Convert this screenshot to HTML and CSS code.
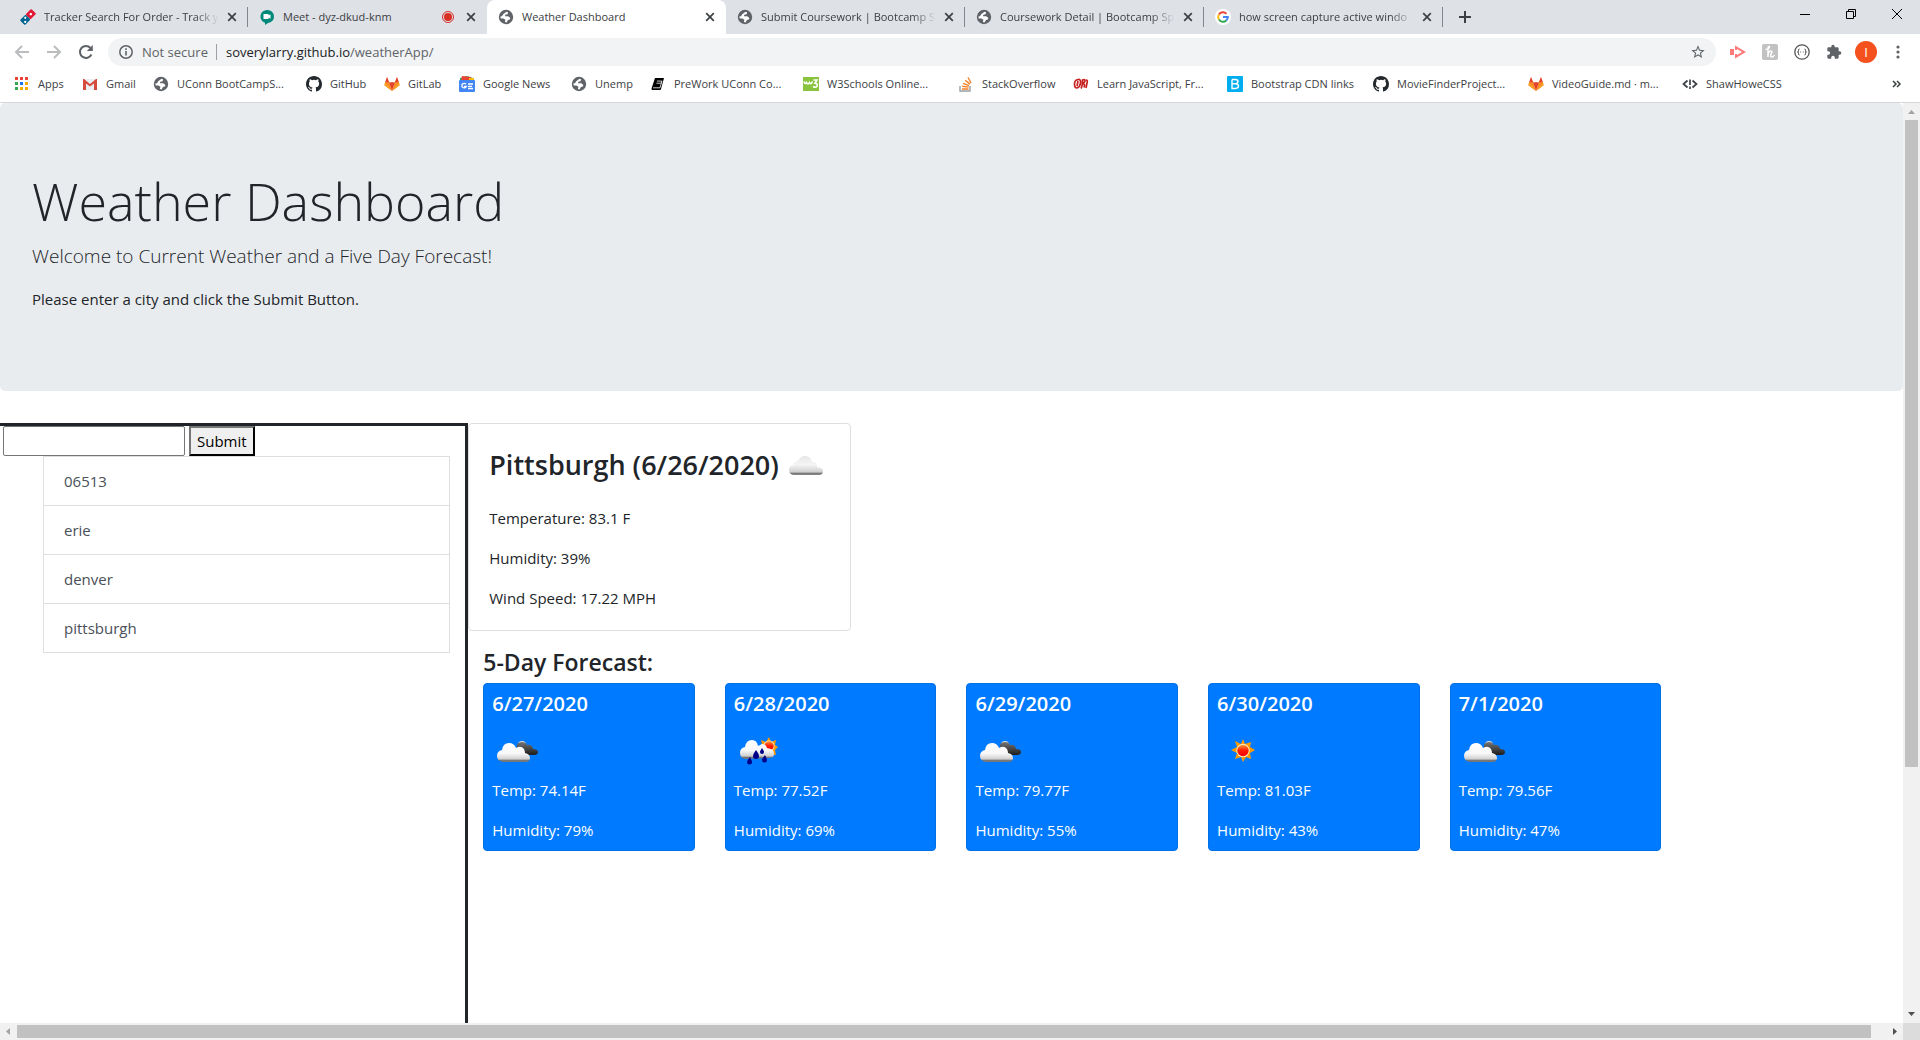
FILE: index.html
```html
<!DOCTYPE html>
<html lang="en">
<head>
<meta charset="utf-8">
<title>Weather Dashboard</title>
<link rel="stylesheet" href="styles.css">
</head>
<body>
<svg class="defs" aria-hidden="true">
  <defs>
    <linearGradient id="cloud-fill" x1="0" y1="0" x2="0" y2="1">
      <stop offset="0" stop-color="#fff"/><stop offset=".55" stop-color="#f8f8f8"/><stop offset=".85" stop-color="#cfcfcf"/><stop offset=".9" stop-color="#777"/><stop offset="1" stop-color="#777"/>
    </linearGradient>
    <linearGradient id="grey-fill" x1="0" y1="0" x2="0" y2="1">
      <stop offset="0" stop-color="#e6e6e6"/><stop offset=".45" stop-color="#f5f5f5"/><stop offset=".85" stop-color="#cfcfcf"/><stop offset=".9" stop-color="#777"/><stop offset="1" stop-color="#888"/>
    </linearGradient>
    <linearGradient id="dark-fill" x1="0" y1="0" x2="0" y2="1">
      <stop offset="0" stop-color="#777"/><stop offset=".4" stop-color="#505050"/><stop offset="1" stop-color="#1c1c1c"/>
    </linearGradient>
    <linearGradient id="sun-fill" x1="0" y1="0" x2="0" y2="1">
      <stop offset="0" stop-color="#ff9a3c"/><stop offset=".5" stop-color="#ff1a00"/><stop offset="1" stop-color="#f00"/>
    </linearGradient>
  </defs>
  <symbol id="globe" viewBox="0 0 16 16"><circle cx="8" cy="8" r="7.200" fill="#5f6368"/><path d="M8.500 2.800 10 3.200 9.600 5.200 7.300 5.800 7 7.300h3.200l2.200 1.800-.6 1.500-1.800.4-1.500 2.500-1.600-.4.500-2.300-2-1.200H2.800L2.300 7.600 4 7.300l1.200-2.100z" fill="#fff"/></symbol>
  <symbol id="close" viewBox="0 0 10 10"><path d="m1.200 1.200 7.600 7.600m0-7.600L1.200 8.800" stroke="#3c4043" stroke-width="1.700"/></symbol>
  <symbol id="github" viewBox="0 0 16 16"><path fill="#24292e" d="M8 0C3.580 0 0 3.580 0 8c0 3.540 2.290 6.530 5.470 7.590.4.070.55-.17.55-.38 0-.19-.01-.82-.01-1.490-2.010.37-2.530-.49-2.690-.94-.09-.23-.48-.94-.82-1.130-.28-.15-.68-.52-.01-.53.63-.01 1.080.58 1.230.82.72 1.210 1.870.87 2.330.66.07-.52.28-.87.51-1.070-1.780-.2-3.640-.89-3.640-3.950 0-.87.31-1.590.82-2.150-.08-.2-.36-1.020.08-2.120 0 0 .67-.21 2.200.82a7.640 7.640 0 0 1 4 0c1.530-1.040 2.200-.82 2.200-.82.44 1.100.16 1.920.08 2.120.51.56.82 1.270.82 2.150 0 3.070-1.870 3.750-3.650 3.950.29.25.54.73.54 1.480 0 1.070-.01 1.930-.01 2.200 0 .21.15.46.55.38A8.010 8.010 0 0 0 16 8c0-4.420-3.580-8-8-8z"/></symbol>
  <symbol id="gitlab" viewBox="0 0 16 16"><path d="M8 15 .4 9.300 1.200 6h4z" fill="#fc8a26"/><path d="m8 15 7.600-5.700L14.800 6h-4z" fill="#fc8a26"/><path d="M8 15 5.100 6.200h5.800z" fill="#e24329"/><path d="M1.100 6.300 3 .8l2.200 5.500zM14.900 6.300 13 .8l-2.200 5.500z" fill="#e24329"/><path d="M8 15 .4 9.300l.7-3zM8 15l7.600-5.700-.7-3z" fill="#fca326"/></symbol>
  <symbol id="clouds" viewBox="0 0 50 50"><circle cx="30" cy="21" r="4" fill="#ddd"/><path d="M25 30V21q1-3 5-3 4 0 5 3 5-1 6 4 5 0 5 3 0 3-4 3H28z" fill="url(#dark-fill)"/><path d="M11 38q-6-1-6-6 0-5 5-6 1-7 7-7 5 0 7 5 5-3 8 1 1 2 1 4 5 1 5 5 0 4-5 4z" fill="url(#cloud-fill)"/></symbol>
  <symbol id="cloud" viewBox="0 0 50 50"><path d="M12 35q-4-1-4-5 0-4 4-5 1-4 5-4 2-5 7-5 6 0 7 6 5-1 5 5 6 1 6 4 0 4-4 4z" fill="url(#grey-fill)"/></symbol>
  <symbol id="sun" viewBox="0 0 50 50"><path d="m26 15 2 5 6-2-1 5 5 3-5 3 1 6-5-2-3 5-2-5-6 2 2-6-6-3 6-3-2-6 6 3z" fill="#f90"/><circle cx="26" cy="26.500" r="6.700" fill="#fff1c0"/><circle cx="26" cy="26.500" r="5.700" fill="url(#sun-fill)"/></symbol>
  <symbol id="rain" viewBox="0 0 50 50"><path d="m35 13 2 5 5-2-1 5 3 2-3 3 1 5-5-1-3 4-3-4-4 1 1-5-3-3 3-3-1-4 5 2z" fill="#f90"/><circle cx="35" cy="22" r="5.500" fill="#fff1c0"/><circle cx="35" cy="22" r="4.700" fill="url(#sun-fill)"/><path d="M11 35q-5-1-5-6 0-5 5-6 1-7 7-7 5 0 6 6l4-2q4 0 5 4l4 1q3 1 3 5t-5 4z" fill="url(#cloud-fill)"/><path d="M22 26q3 4 3 6a3 3 0 0 1-6 0q0-2 3-6zM28 24q2 3 2 4a2 2 0 0 1-4 0q0-1 2-4zM31 31q2 4 2 5a2.500 2.500 0 0 1-5 0q0-1 3-5zM16 33q2 4 2 5a2.500 2.500 0 0 1-5 0q0-1 3-5z" fill="#00008b"/></symbol>
</svg>

<header class="browser">
  <div class="tabs">
    <div class="tab">
      <svg class="icon" viewBox="0 0 16 16"><g transform="rotate(45 8 8)"><rect x="4.500" y="0" width="7" height="8" rx="1" fill="#e31837"/><rect x="4.500" y="8" width="7" height="8" rx="1" fill="#006491"/><circle cx="8" cy="4" r="1.300" fill="#fff"/><circle cx="6.600" cy="10.500" r="1.100" fill="#fff"/><circle cx="9.500" cy="13.400" r="1.100" fill="#fff"/></g></svg>
      <span class="tab-title fade">Tracker Search For Order - Track y</span>
      <button class="tab-close" aria-label="Close tab"><svg><use href="#close"/></svg></button>
    </div>
    <div class="tab tab-before">
      <svg class="icon" viewBox="0 0 16 16"><path d="M8 1a6.500 6.500 0 0 1 1 13l-3 2v-2.300A6.500 6.500 0 0 1 8 1z" fill="#00897b"/><path d="M4.500 5h5v1.500l2-1.200v4.400l-2-1.200V10h-5z" fill="#fff"/></svg>
      <span class="tab-title">Meet - dyz-dkud-knm</span>
      <svg class="record" viewBox="0 0 12 12"><circle cx="6" cy="6" r="5.500" fill="none" stroke="#d93025"/><circle cx="6" cy="6" r="4" fill="#d93025"/></svg>
      <button class="tab-close" aria-label="Close tab"><svg><use href="#close"/></svg></button>
    </div>
    <div class="tab tab-active">
      <svg class="icon"><use href="#globe"/></svg>
      <span class="tab-title">Weather Dashboard</span>
      <button class="tab-close" aria-label="Close tab"><svg><use href="#close"/></svg></button>
    </div>
    <div class="tab">
      <svg class="icon"><use href="#globe"/></svg>
      <span class="tab-title fade">Submit Coursework | Bootcamp S</span>
      <button class="tab-close" aria-label="Close tab"><svg><use href="#close"/></svg></button>
    </div>
    <div class="tab">
      <svg class="icon"><use href="#globe"/></svg>
      <span class="tab-title fade">Coursework Detail | Bootcamp Sp</span>
      <button class="tab-close" aria-label="Close tab"><svg><use href="#close"/></svg></button>
    </div>
    <div class="tab">
      <svg class="icon" viewBox="0 0 16 16"><circle cx="8" cy="8" r="8" fill="#fff"/><g fill="none" stroke-width="2"><path d="M3.900 5.500A4.800 4.800 0 0 1 11.500 4.700" stroke="#ea4335"/><path d="M3.900 10.500a4.800 4.800 0 0 1 0-5" stroke="#fbbc05"/><path d="M11.300 11.500a4.800 4.800 0 0 1-7.400-1" stroke="#34a853"/><path d="M8 8h4.800a4.800 4.800 0 0 1-1.500 3.500" stroke="#4285f4"/></g></svg>
      <span class="tab-title fade">how screen capture active windo</span>
      <button class="tab-close" aria-label="Close tab"><svg><use href="#close"/></svg></button>
    </div>
    <button class="new-tab" aria-label="New tab"><svg viewBox="0 0 12 12"><path d="M6 0v12M0 6h12" stroke="#3c4043" stroke-width="2"/></svg></button>
    <div class="window-controls">
      <button aria-label="Minimize"><svg viewBox="0 0 12 12"><path d="M1 6.500h10" stroke="#000"/></svg></button>
      <button aria-label="Restore"><svg viewBox="0 0 12 12"><path d="M1.500 3.500h7v7h-7zM3.500 3.500v-2h7v7h-2" fill="none" stroke="#000"/></svg></button>
      <button aria-label="Close"><svg viewBox="0 0 12 12"><path d="m1 1 10 10M11 1 1 11" stroke="#000"/></svg></button>
    </div>
  </div>

  <div class="toolbar">
    <button class="nav" aria-label="Back"><svg viewBox="0 0 16 16"><path d="M15 8H2m6-6L2 8l6 6" fill="none" stroke="#babcbe" stroke-width="2"/></svg></button>
    <button class="nav" aria-label="Forward"><svg viewBox="0 0 16 16"><path d="M1 8h13M8 2l6 6-6 6" fill="none" stroke="#babcbe" stroke-width="2"/></svg></button>
    <button class="nav" aria-label="Reload"><svg viewBox="0 0 16 16"><path d="M13.400 10.500A6 6 0 1 1 12.500 4" fill="none" stroke="#5f6368" stroke-width="2"/><path d="M14.800 1v6h-6z" fill="#5f6368"/></svg></button>
    <div class="address">
      <svg class="info" viewBox="0 0 14 14"><circle cx="7" cy="7" r="6.200" fill="none" stroke="#5f6368" stroke-width="1.500"/><path d="M7 6v4.500M7 3.300v1.600" stroke="#5f6368" stroke-width="1.600"/></svg>
      <span class="secure">Not secure</span>
      <span class="url"><b>soverylarry.github.io</b>/weatherApp/</span>
      <svg class="star" viewBox="0 0 24 24"><path fill="#5f6368" d="m22 9.240-7.190-.62L12 2 9.190 8.630 2 9.240l5.460 4.730L5.820 21 12 17.270 18.180 21l-1.630-7.030zM12 15.400l-3.760 2.270 1-4.280-3.320-2.880 4.380-.38L12 6.100l1.710 4.040 4.380.38-3.320 2.880 1 4.280z"/></svg>
    </div>
    <div class="extensions">
      <svg viewBox="0 0 16 16"><path d="M0 5h4v6H0z" fill="#ff7b7b"/><path d="M5 1.500 16 8 5 14.500V10h2v1l5-3-5-3v1H5z" fill="#ff7b7b"/></svg>
      <svg viewBox="0 0 16 16"><rect width="16" height="16" rx="2" fill="#c2c2c2"/><path d="M3.500 5.500Q7.500 5 7.500 2.500 6 2 6 5v8M6 10q1-3 3-3t0 3q-1 3 1 3 1.500 0 2.500-2" fill="none" stroke="#fff" stroke-width="1.500"/></svg>
      <svg viewBox="0 0 16 16"><circle cx="8" cy="8" r="7.200" fill="none" stroke="#555" stroke-width="1.300"/><path d="M5.500 5Q4.300 5 4.500 6.500 4.700 8 3.500 8 4.700 8 4.500 9.500 4.300 11 5.500 11M10.500 5q1.200 0 1 1.500-.2 1.500 1 1.500-1.200 0-1 1.500.2 1.500-1 1.500M6.300 8h.8m1.800 0h.8" fill="none" stroke="#444"/></svg>
      <svg viewBox="0 0 24 24"><path fill="#5f6368" d="M20.500 11H19V7c0-1.100-.9-2-2-2h-4V3.500a2.500 2.500 0 0 0-5 0V5H4c-1.100 0-2 .9-2 2v3.800h1.500a2.700 2.700 0 0 1 0 5.400H2V20c0 1.100.9 2 2 2h3.800v-1.500a2.700 2.700 0 0 1 5.400 0V22H17c1.100 0 2-.9 2-2v-4h1.500a2.500 2.500 0 0 0 0-5z"/></svg>
    </div>
    <button class="avatar">I</button>
    <button class="more" aria-label="Menu"><svg viewBox="0 0 4 14"><g fill="#5f6368"><circle cx="2" cy="2" r="1.600"/><circle cx="2" cy="7" r="1.600"/><circle cx="2" cy="12" r="1.600"/></g></svg></button>
  </div>

  <nav class="bookmarks">
    <a href="#"><svg class="icon" viewBox="0 0 16 16"><path d="M1 1h3v3H1zM6 1h3v3H6zM11 1h3v3h-3z" fill="#ea4335"/><path d="M1 6h3v3H1z" fill="#34a853"/><path d="M6 6h3v3H6z" fill="#1a73e8"/><path d="M11 6h3v3h-3zM6 11h3v3H6zM11 11h3v3h-3z" fill="#fbab00"/><path d="M1 11h3v3H1z" fill="#34a853"/></svg>Apps</a>
    <a href="#"><svg class="icon" viewBox="0 0 16 16"><path d="M1 3h14v11H1z" fill="#eceff1"/><path d="M1 3h1l6 5 6-5h1v11h-3V7.500l-4 3-4-3V14H1z" fill="#d54b3d"/></svg>Gmail</a>
    <a href="#"><svg class="icon"><use href="#globe"/></svg>UConn BootCampS...</a>
    <a href="#"><svg class="icon"><use href="#github"/></svg>GitHub</a>
    <a href="#"><svg class="icon"><use href="#gitlab"/></svg>GitLab</a>
    <a href="#"><svg class="icon" viewBox="0 0 16 16"><path d="M1 2 8 0l6 2v3H1z" fill="#34a853"/><path d="m3 0 9 1v4H2z" fill="#ea4335"/><path d="M10 2h5v4h-5z" fill="#fbbc05"/><rect y="4" width="16" height="12" rx="1" fill="#4285f4"/><path d="M7 8.200A2.300 2.300 0 1 0 7.300 10.500H5M9 8h5M9 10.300h4M9 12.500h5" fill="none" stroke="#fff" stroke-width="1.300"/></svg>Google News</a>
    <a href="#"><svg class="icon"><use href="#globe"/></svg>Unemp</a>
    <a href="#"><svg class="icon" viewBox="0 0 16 16"><path d="M5 2h9l-3 11q0 1-1 1H2q-1-1 0-3z"/><path d="m7 5 5 .2M6.400 7.200h5M3 11.800h7l2-7" fill="none" stroke="#fff" stroke-width=".8"/></svg>PreWork UConn Co...</a>
    <a href="#"><svg class="icon" viewBox="0 0 16 16"><path d="M0 1h16v14H0z" fill="#8ac43f"/><path d="M1 5.500q1 3.500 2.500 1 1.500 3 3 0 1.500 3 3-1M10.500 4h3.500L12 7.300q3 0 2 3-1.500 2-4 0" fill="none" stroke="#fff" stroke-width="1.600"/></svg>W3Schools Online...</a>
    <a href="#"><svg class="icon" viewBox="0 0 16 16"><path d="M2 10v5h10v-5" fill="none" stroke="#9b9da0" stroke-width="1.400"/><path d="M4 13h6.500M4.300 10.300l6.300.8M5.200 7.400l5.800 2.200M7.200 4.200l4.800 3.900M10 1.500l3 5.500" stroke="#f48024" stroke-width="1.400"/></svg>StackOverflow</a>
    <a href="#"><svg class="icon" viewBox="0 0 16 16"><path d="M5 3.500Q1.500 4 1.500 8T4 12q3-1 3.500-5T5 3.500m0 1.500-1 5M8 12.500Q9.500 10 9.500 4q3-1 2.500 1T9.500 7.500q3 0 1.500 4m2-7.500q2 0 1 3l-1 5" fill="none" stroke="#c6211f" stroke-width="1.700"/></svg>Learn JavaScript, Fr...</a>
    <a href="#"><svg class="icon" viewBox="0 0 16 16"><rect width="16" height="16" rx="1" fill="#00aeef"/><path d="M5 3.500h3.500q2.500.2 2.500 2T8.500 7.700H5m3.500 0q3 .2 3 2.400t-3 2.400H5v-9" fill="none" stroke="#fff" stroke-width="1.400"/></svg>Bootstrap CDN links</a>
    <a href="#"><svg class="icon"><use href="#github"/></svg>MovieFinderProject...</a>
    <a href="#"><svg class="icon"><use href="#gitlab"/></svg>VideoGuide.md · m...</a>
    <a href="#"><svg class="icon" viewBox="0 0 16 16"><path d="M5.500 4.500 1.500 8l4 3.500m5-7 4 3.500-4 3.500M8 3.500v5.500m0 1.500V13" fill="none" stroke="#3c4048" stroke-width="1.700"/></svg>ShawHoweCSS</a>
    <button class="overflow" aria-label="More bookmarks"><svg viewBox="0 0 10 8"><path d="m1 1 3 3-3 3m4-6 3 3-3 3" fill="none" stroke="#3c4043" stroke-width="1.500"/></svg></button>
  </nav>
</header>

<div class="viewport">
  <div class="page">
    <section class="jumbotron">
      <h1>Weather Dashboard</h1>
      <p class="lead">Welcome to Current Weather and a Five Day Forecast!</p>
      <p>Please enter a city and click the Submit Button.</p>
    </section>
    <div class="dashboard">
      <aside class="sidebar">
        <form class="search">
          <input type="text" aria-label="City">
          <button type="button">Submit</button>
        </form>
        <ul class="history">
          <li>06513</li>
          <li>erie</li>
          <li>denver</li>
          <li>pittsburgh</li>
        </ul>
      </aside>
      <main class="results">
        <section class="current">
          <h3>Pittsburgh (6/26/2020) <svg class="weather"><use href="#cloud"/></svg></h3>
          <p>Temperature: 83.1 F</p>
          <p>Humidity: 39%</p>
          <p>Wind Speed: 17.22 MPH</p>
        </section>
        <section class="forecast">
          <h4>5-Day Forecast:</h4>
          <div class="days">
            <article class="day"><h5>6/27/2020</h5><svg class="weather"><use href="#clouds"/></svg><p>Temp: 74.14F</p><p>Humidity: 79%</p></article>
            <article class="day"><h5>6/28/2020</h5><svg class="weather"><use href="#rain"/></svg><p>Temp: 77.52F</p><p>Humidity: 69%</p></article>
            <article class="day"><h5>6/29/2020</h5><svg class="weather"><use href="#clouds"/></svg><p>Temp: 79.77F</p><p>Humidity: 55%</p></article>
            <article class="day"><h5>6/30/2020</h5><svg class="weather"><use href="#sun"/></svg><p>Temp: 81.03F</p><p>Humidity: 43%</p></article>
            <article class="day"><h5>7/1/2020</h5><svg class="weather"><use href="#clouds"/></svg><p>Temp: 79.56F</p><p>Humidity: 47%</p></article>
          </div>
        </section>
      </main>
    </div>
  </div>
  <div class="scroll scroll-y">
    <svg class="arrow" viewBox="0 0 17 17"><path d="M5 11h7L8.500 7z" fill="#a3a3a3"/></svg>
    <div class="track"><div class="thumb"></div></div>
    <svg class="arrow" viewBox="0 0 17 17"><path d="M5 6h7l-3.500 4z" fill="#505050"/></svg>
  </div>
  <div class="scroll scroll-x">
    <svg class="arrow" viewBox="0 0 17 17"><path d="M10 5v7L6 8.500z" fill="#a3a3a3"/></svg>
    <div class="track"><div class="thumb"></div></div>
    <svg class="arrow" viewBox="0 0 17 17"><path d="M7 5v7l4-3.500z" fill="#505050"/></svg>
  </div>
  <div class="corner"></div>
</div>
</body>
</html>
```
FILE: styles.css
```css
* { box-sizing: border-box; }

body {
  margin: 0;
  min-height: 100vh;
  display: flex;
  flex-direction: column;
  background: #fff;
  color: #212529;
  font: 15px/24px "Open Sans", "Noto Sans", sans-serif;
}

h1, h3, h4, h5, p, ul { margin: 0; }
svg { display: block; flex: none; }
.defs { position: absolute; width: 0; height: 0; }

/* Browser window */
.browser {
  border-bottom: 1px solid #d5d7da;
  color: #3c4043;
  font-size: 11px;
  line-height: 16px;
}
.browser button {
  display: flex;
  align-items: center;
  justify-content: center;
  padding: 0;
  border: 0;
  background: none;
}
.icon { width: 16px; height: 16px; }

.tabs {
  display: flex;
  height: 34px;
  padding-left: 9px;
  background: #dee1e6;
}
.tab {
  position: relative;
  flex: 0 1 239px;
  min-width: 0;
  display: flex;
  align-items: center;
  gap: 8px;
  padding: 0 11px;
}
.tab::after {
  content: "";
  position: absolute;
  right: 0;
  top: 7px;
  width: 1px;
  height: 20px;
  background: #80868b;
}
.tab-before::after, .tab-active::after { display: none; }
.tab-active {
  background: #fff;
  border-radius: 8px 8px 0 0;
}
.tab-title {
  flex: 1;
  overflow: hidden;
  white-space: nowrap;
}
.fade { mask-image: linear-gradient(to left, transparent, #000 24px); }
.tab-close svg { width: 10px; height: 10px; }
.record { width: 12px; height: 12px; margin-right: 4px; }
.new-tab { width: 44px; }
.new-tab svg { width: 12px; height: 12px; }
.window-controls {
  display: flex;
  margin-left: auto;
  height: 28px;
}
.window-controls button { width: 46px; }
.window-controls svg { width: 12px; height: 12px; }

.toolbar {
  display: flex;
  align-items: center;
  height: 36px;
  padding: 0 20px 0 14px;
}
.nav { width: 16px; margin-right: 16px; }
.nav svg { width: 16px; height: 16px; }
.address {
  flex: 1;
  display: flex;
  align-items: center;
  height: 28px;
  margin-left: -2px;
  padding: 0 10px 0 11px;
  border-radius: 14px;
  background: #f1f3f4;
  color: #5f6368;
  font-size: 13px;
}
.info { width: 14px; height: 14px; }
.secure {
  margin: 0 9px;
  padding-right: 8px;
  border-right: 1px solid #9aa0a6;
}
.url b { color: #202124; font-weight: 400; }
.star { width: 16px; height: 16px; margin-left: auto; }
.extensions { display: flex; gap: 16px; margin: 0 13px 0 14px; }
.extensions svg { width: 16px; height: 16px; }
.browser .avatar {
  width: 22px;
  height: 22px;
  border-radius: 50%;
  background: #f4511e;
  color: #fff;
  font: 13px "Open Sans", sans-serif;
}
.more { width: 4px; margin-left: 19px; }
.more svg { width: 4px; height: 14px; }

.bookmarks {
  display: grid;
  grid-template-columns: 68px 71px 153px 78px 75px 112px 79px 153px 155px 115px 154px 146px 155px 154px 1fr auto;
  align-items: center;
  height: 32px;
  padding: 0 18px 4px 14px;
}
.bookmarks a {
  display: flex;
  align-items: center;
  gap: 8px;
  color: inherit;
  text-decoration: none;
  white-space: nowrap;
}
.overflow svg { width: 10px; height: 8px; }

/* Page area with its scroll bars */
.viewport {
  flex: 1;
  display: grid;
  grid-template: 1fr 17px / 1fr 17px;
}
.page { display: flex; flex-direction: column; min-width: 0; }
.scroll { display: flex; background: #f1f1f1; }
.scroll-y { flex-direction: column; }
.arrow { width: 17px; height: 17px; }
.track { flex: 1; }
.thumb { background: #c1c1c1; }
.scroll-y .thumb { width: 13px; height: 73%; margin: 0 2px; }
.scroll-x .thumb { height: 13px; width: 99.2%; margin: 2px 0; }
.corner { background: #dcdcdc; }

/* Weather dashboard */
.jumbotron {
  padding: 64px 32px 80px;
  margin-bottom: 32px;
  border-radius: 5px;
  background: #e9ecef;
}
.jumbotron h1 {
  margin-bottom: 6px;
  font-size: 52px;
  font-weight: 300;
  line-height: 68px;
}
.lead {
  margin-bottom: 16px;
  font-size: 19px;
  font-weight: 300;
  line-height: 30px;
}

.dashboard { flex: 1; display: flex; }
.sidebar {
  width: calc((100% - 30px) / 4);
  border: solid #212529;
  border-width: 3px 3px 0 0;
}
.search { display: flex; gap: 4px; padding-left: 3px; }
.search input {
  width: 182px;
  height: 30px;
  border: 1px solid #767676;
  border-radius: 2px;
}
.search button {
  height: 30px;
  padding: 0 6px;
  border: 2px outset #767676;
  border-color: #767676 #212121 #212121 #767676;
  background: #efefef;
  color: #000;
  font: inherit;
}
.history {
  margin: 0 15px 0 43px;
  padding: 0;
  border: 1px solid #dfdfdf;
  border-top: 0;
  list-style: none;
  color: #495057;
}
.history li {
  padding: 12px 20px;
  border-top: 1px solid #dfdfdf;
}

.results { flex: 1; min-width: 0; }
.current {
  width: calc(80% / 3);
  display: grid;
  gap: 16px;
  padding: 20px;
  border: 1px solid #dfdfdf;
  border-radius: 4px;
}
.current h3 {
  display: flex;
  align-items: center;
  gap: 2px;
  height: 42px;
  margin-bottom: 4px;
  font-size: 27px;
  font-weight: 600;
  line-height: 34px;
  white-space: nowrap;
}
.weather { width: 50px; height: 50px; }
.forecast { width: 84.2%; padding: 16px 15px 0; }
.forecast h4 {
  margin-bottom: 6px;
  font-size: 23px;
  font-weight: 600;
  line-height: 30px;
}
.days { display: grid; grid-template-columns: repeat(5, 1fr); gap: 30px; }
.day {
  padding: 8px;
  border: 1px solid #0070e8;
  border-radius: 4px;
  background: #007bff;
  color: #fff;
}
.day h5 { margin-bottom: 8px; font-size: 20px; font-weight: 600; line-height: 24px; }
.day .weather { margin-bottom: 4px; }
.day p + p { margin-top: 16px; }
```
